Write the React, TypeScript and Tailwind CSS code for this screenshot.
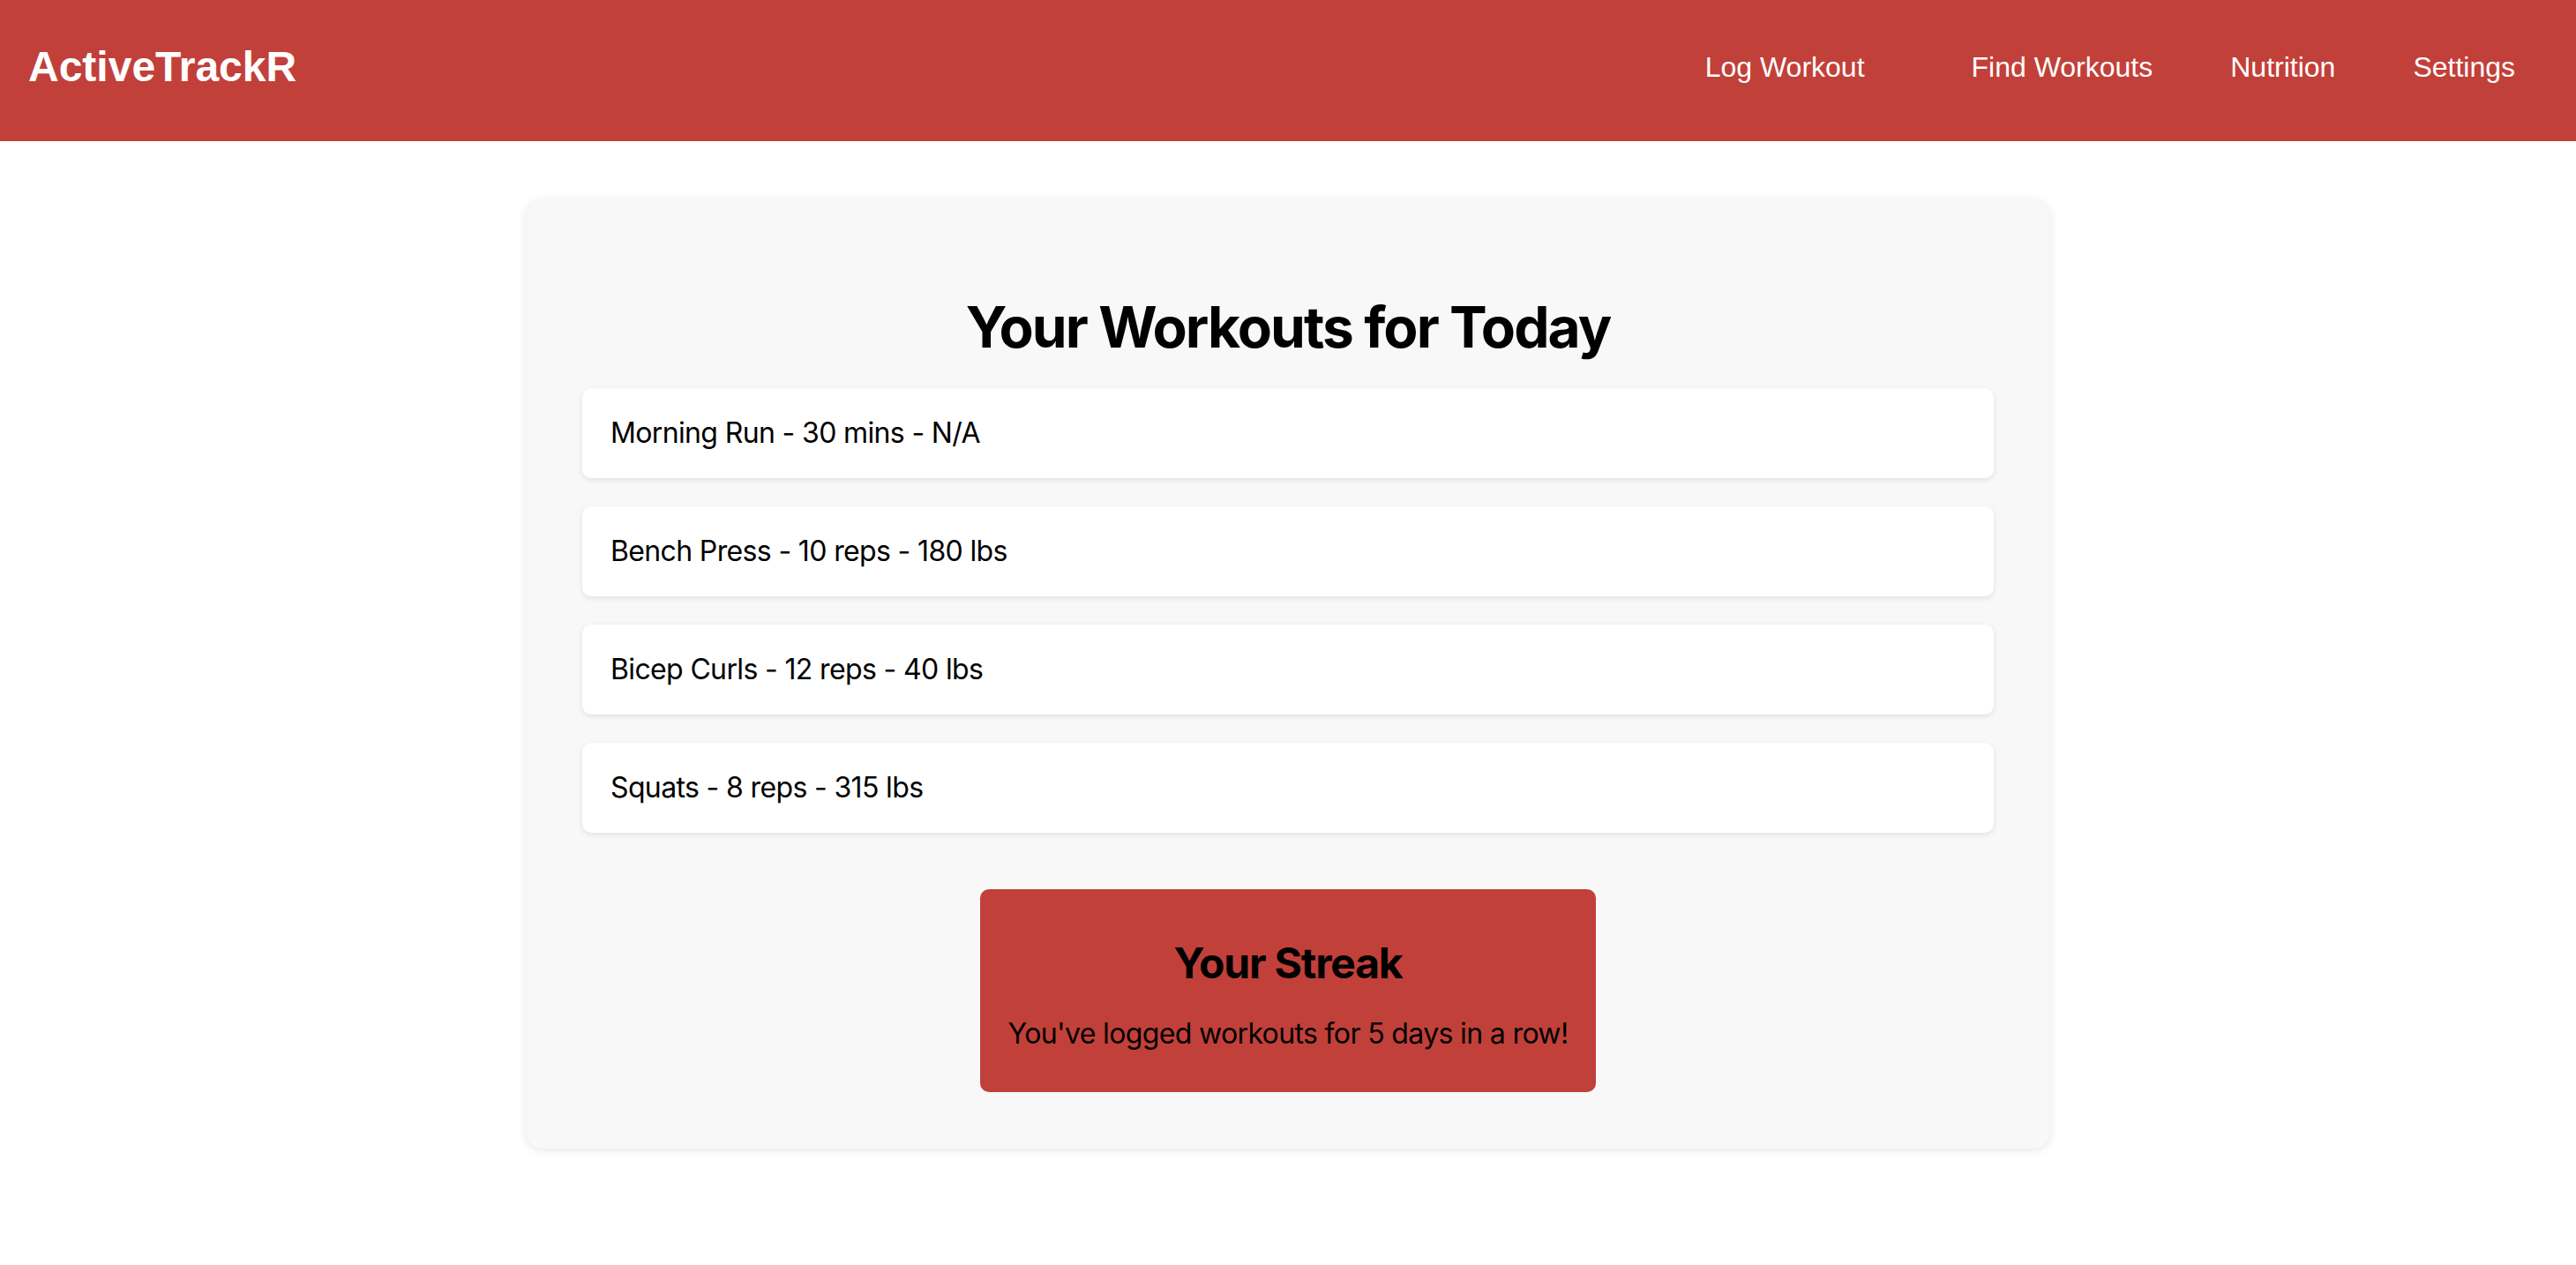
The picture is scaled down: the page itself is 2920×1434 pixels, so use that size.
const workouts = [
  "Morning Run - 30 mins - N/A",
  "Bench Press - 10 reps - 180 lbs",
  "Bicep Curls - 12 reps - 40 lbs",
  "Squats - 8 reps - 315 lbs",
]

export default function App() {
  return (
    <div className="min-h-screen bg-white font-['Inter','Noto_Sans',sans-serif] text-black">
      <header className="flex h-[160px] items-center justify-between bg-[#c2403a] pb-[9px] pl-8 pr-[69px] font-['Liberation_Sans',Arial,sans-serif] text-white">
        <div className="text-[48px] font-bold">ActiveTrackR</div>
        <nav className="flex items-center gap-[88px] text-[32px]">
          <a href="#" className="mr-[33px]">Log Workout</a>
          <a href="#">Find Workouts</a>
          <a href="#">Nutrition</a>
          <a href="#">Settings</a>
        </nav>
      </header>

      <main className="flex justify-center pt-[65px] pb-16">
        <section className="w-[1728px] rounded-[20px] bg-[#f8f8f8] p-16 shadow-[0_2px_10px_rgba(0,0,0,0.1)]">
          <h1 className="mt-[43px] mb-[31px] text-center text-[64px] leading-[77px] font-bold tracking-[-0.03em]">
            Your Workouts for Today
          </h1>

          <div className="flex flex-col gap-8">
            {workouts.map((w) => (
              <div
                key={w}
                className="rounded-[10px] bg-white p-8 text-[32px] leading-[38px] tracking-[-0.02em] shadow-[0_2px_6px_rgba(0,0,0,0.1)]"
              >
                {w}
              </div>
            ))}
          </div>

          <div className="mt-16 flex justify-center">
            <div className="rounded-[10px] bg-[#c2403a] px-8 pt-[55px] pb-[47px] text-center">
              <h2 className="text-[48px] leading-[58px] font-bold tracking-[-0.025em]">Your Streak</h2>
              <p className="mt-[31px] text-[32px] leading-[39px] tracking-[-0.02em]">
                You've logged workouts for 5 days in a row!
              </p>
            </div>
          </div>
        </section>
      </main>
    </div>
  )
}
